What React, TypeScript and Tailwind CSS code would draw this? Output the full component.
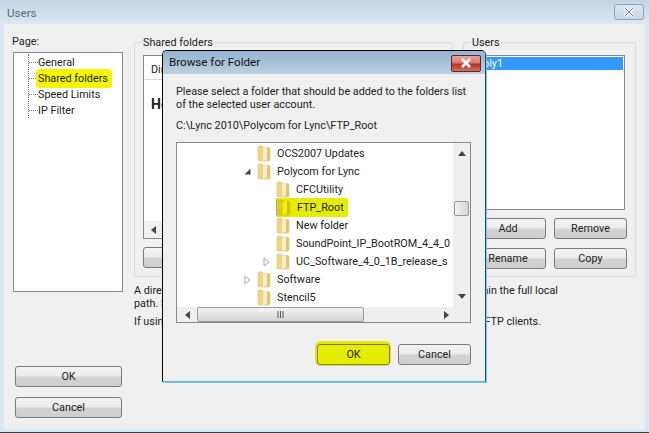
import React from "react";

const Btn = ({ label, className = "" }: { label: string; className?: string }) => (
  <div className={`flex items-center justify-center rounded-[3px] border border-[#7a7a7a] bg-[linear-gradient(#f4f4f4_0%,#ebebeb_48%,#d2d2d2_52%,#cfcfcf_100%)] text-[#222] ${className}`}>
    {label}
  </div>
);

const Folder = ({ selected }: { selected?: boolean }) => (
  <svg width="14" height="17" viewBox="0 0 14 17" className="shrink-0">
    <path d="M1 2.5 Q1 1 2.5 1 H5 L6.5 2.5 H11.5 Q13 2.5 13 4 V15 Q13 16 12 16 H2 Q1 16 1 15 Z" fill={selected ? "#d8c800" : "#e8d48c"} stroke={selected ? "#cdbd00" : "#d8c47c"} strokeWidth="0.7" />
    <path d="M1.5 3.5 H6 V15.5 H1.5 Z" fill={selected ? "#e4d000" : "#eed680"} />
    <path d="M6 3 L10 2 V14.5 L6 16 Z" fill={selected ? "#f4ec20" : "#f9efc4"} />
    <path d="M10 3 H13 V15.5 H10 Z" fill={selected ? "#d4c400" : "#dcc67e"} />
  </svg>
);

type RowProps = { label: string; level: 0 | 1; arrow?: "open" | "closed"; selected?: boolean };

const TreeRow = ({ label, level, arrow, selected }: RowProps) => (
  <div className={`relative flex h-[18px] items-center whitespace-nowrap ${level === 0 ? "pl-[80px]" : "pl-[99px]"}`}>
    {arrow === "open" && (
      <svg width="7" height="7" viewBox="0 0 7 7" className={`absolute top-[6px] ${level === 0 ? "left-[67px]" : "left-[86px]"}`}>
        <path d="M6.5 0.5 V6.5 H0.5 Z" fill="#444" />
      </svg>
    )}
    {arrow === "closed" && (
      <svg width="7" height="10" viewBox="0 0 7 10" className={`absolute top-[5px] ${level === 0 ? "left-[67px]" : "left-[86px]"}`}>
        <path d="M1 1 L6 5 L1 9 Z" fill="#fff" stroke="#a6a6a6" />
      </svg>
    )}
    {selected ? (
      <div className="flex h-[19px] items-center rounded-[2px] border-l border-l-[#86a8d8] bg-[#e6ec00] pr-[4px]">
        <Folder selected />
        <span className="ml-[6px]">{label}</span>
      </div>
    ) : (
      <>
        <Folder />
        <span className="ml-[6px]">{label}</span>
      </>
    )}
  </div>
);

const PageItem = ({ label, highlight }: { label: string; highlight?: boolean }) => (
  <div className="flex h-[16px] items-center">
    <div className="w-[9px] border-t border-dotted border-[#777]" />
    <span className={highlight ? "ml-[-2px] rounded-[4px] bg-[#f5f500] px-[2px] py-[3px] pr-[4px]" : "ml-0"}>{label}</span>
  </div>
);

export default function App() {
  return (
    <div className="relative flex h-[433px] w-[649px] flex-col overflow-hidden bg-[#dbe7f2] font-['Roboto',sans-serif] text-[10.8px] leading-[13px] text-[#222]">
      {/* outer title bar */}
      <div className="flex h-[24px] shrink-0 items-center justify-between bg-[linear-gradient(#c4d4e4,#dce8f2)] pl-[7px] pr-[5px]">
        <span className="mt-[2px] text-[11.6px] text-[#5c6b78]">Users</span>
        <div className="flex h-[16px] w-[30px] items-center justify-center rounded-[3px] border border-[#8ea3b8] bg-[linear-gradient(#dfe8f0,#c8d5e2)]">
          <svg width="12" height="10" viewBox="0 0 12 10">
            <path d="M2 1 L10 9 M10 1 L2 9" stroke="#fff" strokeWidth="3" />
            <path d="M2 1 L10 9 M10 1 L2 9" stroke="#6f7f8e" strokeWidth="1" />
          </svg>
        </div>
      </div>

      {/* outer body */}
      <div className="mx-[4px] mb-[3px] flex min-h-0 flex-1 bg-[#f0f0f0] pl-[8px] pr-[12px] pt-[11px]">
        {/* left column */}
        <div className="flex w-[111px] shrink-0 flex-col">
          <div className="h-[17px]">Page:</div>
          <div className="ml-[1px] h-[240px] w-[110px] border border-[#828790] bg-white pl-[14px] pt-[1px]">
            <div className="border-l border-dotted border-[#777]">
              <PageItem label="General" />
              <PageItem label="Shared folders" highlight />
              <PageItem label="Speed Limits" />
              <PageItem label="IP Filter" />
            </div>
          </div>
          <div className="ml-[3px] mt-[74px] flex w-[107px] flex-col gap-[10px]">
            <Btn label="OK" className="h-[21px]" />
            <Btn label="Cancel" className="h-[21px]" />
          </div>
        </div>

        {/* right area */}
        <div className="ml-[11px] flex min-w-0 flex-1 flex-col">
          <div className="flex gap-[10px] pt-[7px]">
            {/* shared folders group */}
            <div className="relative h-[235px] w-[319px] shrink-0 rounded-[2px] border border-[#dcdcdc] pl-[8px] pt-[12px]">
              <span className="absolute left-[7px] top-[-7px] bg-[#f0f0f0] px-[1px]">Shared folders</span>
              <div className="relative h-[184px] border border-[#828790] bg-white">
                <div className="h-[24px] border-b border-[#d5d5d5] pl-[7px] pt-[7px]">Directories</div>
                <div className="ml-[7px] mt-[18px] text-[14px] font-bold">Home</div>
                <div className="absolute bottom-0 left-0 flex h-[17px] w-full items-center bg-[#f0f0f0] pl-[7px]">
                  <svg width="5" height="8" viewBox="0 0 5 8"><path d="M5 0 V8 L0 4 Z" fill="#444" /></svg>
                </div>
              </div>
              <Btn label="Add" className="mt-[8px] h-[21px] w-[70px]" />
            </div>

            {/* users group */}
            <div className="relative h-[235px] w-[173px] shrink-0 rounded-[2px] border border-[#dcdcdc] pl-[8px] pt-[12px]">
              <span className="absolute left-[7px] top-[-7px] bg-[#f0f0f0] px-[1px]">Users</span>
              <div className="h-[155px] w-[153px] border border-[#828790] bg-white p-[1px]">
                <div className="flex h-[13px] items-center bg-[#3399ff] pl-[3px] text-white">poly1</div>
              </div>
              <div className="ml-[-2px] mt-[8px] grid grid-cols-[76px_73px] gap-x-[8px] gap-y-[9px]">
                <Btn label="Add" className="h-[21px]" />
                <Btn label="Remove" className="h-[21px]" />
                <Btn label="Rename" className="h-[21px]" />
                <Btn label="Copy" className="h-[21px]" />
              </div>
            </div>
          </div>

          {/* help text */}
          <div className="w-[424px] pt-[7px] leading-[13px]">
            <div className="flex justify-between"><span>A directory alias will</span><span>must contain the full local</span></div>
            <div>path. Separate multiple aliases</div>
            <div className="mt-[5px] flex justify-between pr-[17px]"><span>If using aliases, please</span><span>confuse FTP clients.</span></div>
          </div>
        </div>
      </div>
      <div className="h-[1px] shrink-0 bg-[#3a3f44]" />

      {/* browse dialog */}
      <div className="absolute left-[162px] top-[50px] flex h-[332px] w-[324px] flex-col rounded-t-[5px] border border-black border-b-[#5fb6dc] border-r-[#1c4d66] bg-[#f0f0f0] shadow-[1px_1px_0_#7fc4e4]">
        <div className="flex h-[23px] shrink-0 items-center justify-between rounded-t-[4px] bg-[linear-gradient(#93b2d0,#bcd0e2)] pl-[6px] pr-[4px]">
          <span className="text-[11.6px] text-[#111]">Browse for Folder</span>
          <div className="mt-[1px] flex h-[17px] w-[30px] items-center justify-center rounded-[2px] border border-[#5a2a2a] bg-[linear-gradient(#e8a49c_0%,#d87a70_45%,#b83020_55%,#d07060_100%)]">
            <svg width="12" height="10" viewBox="0 0 12 10"><path d="M2 1 L10 9 M10 1 L2 9" stroke="#fff" strokeWidth="2.6" /></svg>
          </div>
        </div>
        <div className="flex min-h-0 flex-1 flex-col pl-[13px] pr-[14px] pt-[11px]">
          <div className="leading-[13px]">Please select a folder that should be added to the folders list<br />of the selected user account.</div>
          <div className="mt-[8px] leading-[13px]">C:\Lync 2010\Polycom for Lync\FTP_Root</div>
          <div className="mt-[10px] flex h-[181px] flex-col border border-[#828790] bg-white">
            <div className="flex min-h-0 flex-1">
              <div className="min-w-0 flex-1 overflow-hidden pt-[1px]">
                <TreeRow label="OCS2007 Updates" level={0} />
                <TreeRow label="Polycom for Lync" level={0} arrow="open" />
                <TreeRow label="CFCUtility" level={1} />
                <TreeRow label="FTP_Root" level={1} selected />
                <TreeRow label="New folder" level={1} />
                <TreeRow label="SoundPoint_IP_BootROM_4_4_0" level={1} />
                <TreeRow label="UC_Software_4_0_1B_release_s" level={1} arrow="closed" />
                <TreeRow label="Software" level={0} arrow="closed" />
                <TreeRow label="Stencil5" level={0} />
              </div>
              <div className="flex w-[17px] shrink-0 flex-col items-center bg-[#efefef] pt-[8px]">
                <svg width="8" height="5" viewBox="0 0 8 5"><path d="M4 0 L8 5 H0 Z" fill="#444" /></svg>
                <div className="mt-[45px] h-[15px] w-[15px] rounded-[2px] border border-[#9a9a9a] bg-[linear-gradient(90deg,#f4f4f4,#d4d4d4)]" />
                <div className="flex-1" />
                <svg width="8" height="5" viewBox="0 0 8 5" className="mb-[8px]"><path d="M0 0 H8 L4 5 Z" fill="#444" /></svg>
              </div>
            </div>
            <div className="flex h-[15px] shrink-0 items-center bg-[#efefef]">
              <svg width="5" height="8" viewBox="0 0 5 8" className="ml-[8px]"><path d="M5 0 V8 L0 4 Z" fill="#444" /></svg>
              <div className="ml-[7px] flex h-[15px] w-[167px] items-center justify-center rounded-[2px] border border-[#9a9a9a] bg-[linear-gradient(#f4f4f4,#d4d4d4)]">
                <svg width="7" height="7" viewBox="0 0 7 7"><path d="M1 0 V7 M3.5 0 V7 M6 0 V7" stroke="#555" /></svg>
              </div>
              <svg width="5" height="8" viewBox="0 0 5 8" className="ml-[80px]"><path d="M0 0 V8 L5 4 Z" fill="#444" /></svg>
            </div>
          </div>
          <div className="mt-[21px] flex justify-end gap-[8px]">
            <div className="relative">
              <div className="absolute left-[-2px] top-[-3px] h-[25px] w-[76px] rounded-[6px] bg-[#e6e600]" />
              <Btn label="OK" className="relative h-[21px] w-[73px] border-[#2f9a7a] bg-none bg-[#e4ec00]" />
            </div>
            <Btn label="Cancel" className="h-[21px] w-[73px]" />
          </div>
        </div>
      </div>
    </div>
  );
}
